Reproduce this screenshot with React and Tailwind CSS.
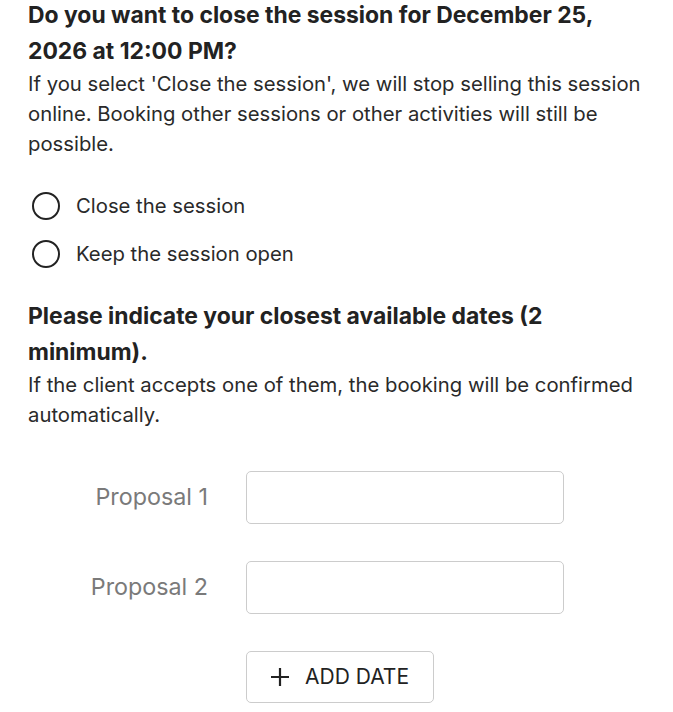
import React from 'react';

const Radio = ({ label }) => (
    <label className="flex items-center gap-[16px] h-[28px] cursor-pointer">
        <span className="w-[28px] h-[28px] shrink-0 rounded-full border-[2.5px] border-[#222]" />
        <span className="text-[20.3px] text-[#2a2a2a]">{label}</span>
    </label>
);

const ProposalRow = ({ label }) => (
    <div className="flex items-center">
        <span className="w-[208px] text-right text-[23.3px] text-[#7a7a7a]">{label}</span>
        <input className="ml-[38px] w-[318px] h-[53px] rounded-[5px] border border-[#cccccc] px-3 outline-none" type="text" />
    </div>
);

export default function App() {
    return (
        <div className="bg-white min-h-screen px-[28px] text-[#2a2a2a]" style={{ fontFamily: 'Inter, "Noto Sans", sans-serif' }}>
            <h2 className="text-[22.9px] font-bold leading-[36px] -mt-[3px] text-[#222]">
                Do you want to close the session for December 25, 2026 at 12:00 PM?
            </h2>
            <p className="text-[20.3px] leading-[30px]">
                If you select 'Close the session', we will stop selling this session online. Booking other sessions or other activities will still be possible.
            </p>

            <div className="flex flex-col gap-[20px] mt-[33px] pl-[4px]">
                <Radio label="Close the session" />
                <Radio label="Keep the session open" />
            </div>

            <h2 className="text-[22.9px] font-bold leading-[36px] mt-[30px] text-[#222]">
                Please indicate your closest available dates (2 minimum).
            </h2>
            <p className="text-[20.3px] leading-[30px]">
                If the client accepts one of them, the booking will be confirmed automatically.
            </p>

            <div className="flex flex-col gap-[37px] mt-[41px] -ml-[28px]">
                <ProposalRow label="Proposal 1" />
                <ProposalRow label="Proposal 2" />
                <div className="pl-[246px]">
                    <button className="flex items-center gap-[16px] h-[52px] w-[188px] pl-[24px] rounded-[5px] border border-[#cccccc] text-[21px] text-[#222]">
                        <svg width="18" height="18" viewBox="0 0 18 18" stroke="#222" strokeWidth="2.2">
                            <path d="M9 0v18M0 9h18" />
                        </svg>
                        ADD DATE
                    </button>
                </div>
            </div>
        </div>
    );
}
